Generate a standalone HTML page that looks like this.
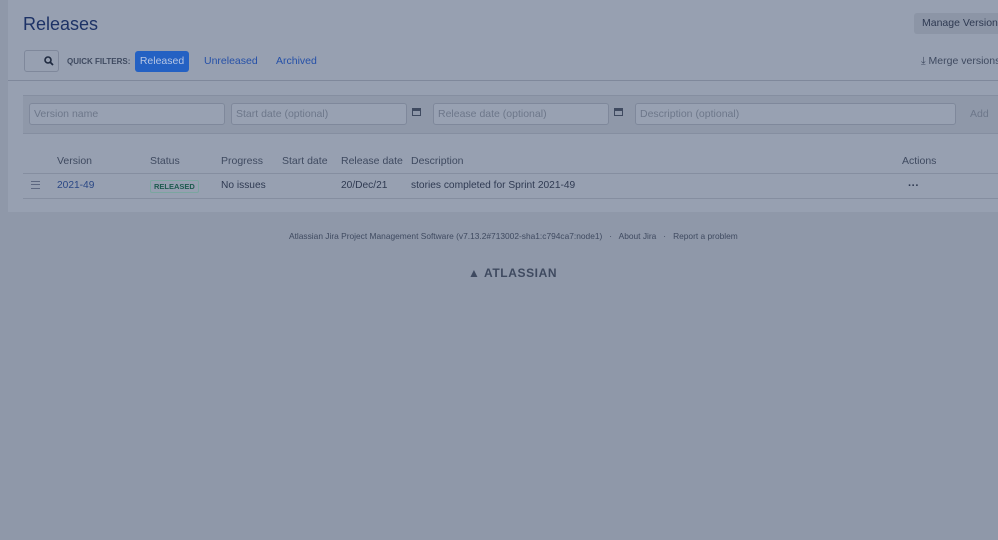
<!DOCTYPE html>
<html><head><meta charset="utf-8"><style>
body{margin:0;width:998px;height:540px;background:#8f98a9;font-family:"Liberation Sans",sans-serif;position:relative;overflow:hidden;color:#2f3a52}
.panel{position:absolute;left:8px;top:0;width:990px;height:212px;background:#97a0b1}
.a{position:absolute;white-space:nowrap}
h1{position:absolute;left:23px;top:14px;margin:0;font-size:18px;font-weight:normal;color:#1d3266}
.inp{position:absolute;top:103px;border:1px solid #7f889b;border-radius:3px;background:#98a1b2;color:#6d778a;font-size:10.5px;line-height:20px;padding-left:4px;box-sizing:border-box;height:22px}
.th{position:absolute;top:155px;font-size:10.5px;color:#3f4a60}
.td{position:absolute;top:180px;font-size:10.2px;color:#2f3a52}
.cal{position:absolute;top:108px;width:9px;height:8px;border:1px solid #3f4a60;border-top-width:3px;box-sizing:border-box}
</style></head><body>
<div class="panel"></div>
<h1>Releases</h1>
<div class="a" style="left:914px;top:13px;width:90px;height:21px;background:#8c95a6;border-radius:3px;font-size:10.5px;line-height:21px;padding-left:8px;color:#2f3a52">Manage Versions</div>
<div class="a" style="left:24px;top:50px;width:35px;height:22px;border:1px solid #7f889b;border-radius:3px;box-sizing:border-box"></div>
<svg class="a" style="left:44px;top:56px" width="10" height="10"><circle cx="4" cy="4" r="3" fill="none" stroke="#1f2a40" stroke-width="1.6"/><path d="M6 6l3 3" stroke="#1f2a40" stroke-width="1.8"/></svg>
<div class="a" style="left:67px;top:57px;font-size:8px;font-weight:bold;color:#3f4a60">QUICK FILTERS:</div>
<div class="a" style="left:135px;top:51px;width:54px;height:21px;background:#2461c3;border-radius:3px;color:#b7c6e4;font-size:10.5px;line-height:21px;text-align:center">Released</div>
<div class="a" style="left:204px;top:55px;font-size:10.5px;color:#2550a8">Unreleased</div>
<div class="a" style="left:276px;top:55px;font-size:10.5px;color:#2550a8">Archived</div>
<div class="a" style="left:921px;top:55px;font-size:10.5px;color:#3f4a60">⤓ Merge versions</div>
<div class="a" style="left:8px;top:80px;width:990px;height:1px;background:#7f889b"></div>
<div class="a" style="left:23px;top:95px;width:975px;height:37px;background:#8f98a9;border-top:1px solid #858ea0;border-bottom:1px solid #858ea0"></div>
<div class="inp" style="left:29px;width:196px">Version name</div>
<div class="inp" style="left:231px;width:176px">Start date (optional)</div>
<div class="cal" style="left:412px"></div>
<div class="inp" style="left:433px;width:176px">Release date (optional)</div>
<div class="cal" style="left:614px"></div>
<div class="inp" style="left:635px;width:321px">Description (optional)</div>
<div class="a" style="left:970px;top:108px;font-size:10.5px;color:#6d778a">Add</div>
<div class="th" style="left:57px">Version</div>
<div class="th" style="left:150px">Status</div>
<div class="th" style="left:221px">Progress</div>
<div class="th" style="left:282px">Start date</div>
<div class="th" style="left:341px">Release date</div>
<div class="th" style="left:411px">Description</div>
<div class="th" style="left:902px">Actions</div>
<div class="a" style="left:23px;top:173px;width:975px;height:1px;background:#858ea0"></div>
<div class="a" style="left:23px;top:198px;width:975px;height:1px;background:#858ea0"></div>
<div class="a" style="left:31px;top:181px;width:9px;height:6px;border-top:1px solid #5d6780;border-bottom:1px solid #5d6780"><div style="margin-top:2px;height:1px;background:#5d6780"></div></div>
<div class="td" style="left:57px;color:#2a4785">2021-49</div>
<div class="a" style="left:150px;top:180px;height:11px;border:1px solid #7aa6a0;border-radius:2px;font-size:7.5px;font-weight:bold;color:#1d5a4e;line-height:11px;padding:0 3px">RELEASED</div>
<div class="td" style="left:221px">No issues</div>
<div class="td" style="left:341px">20/Dec/21</div>
<div class="td" style="left:411px">stories completed for Sprint 2021-49</div>
<div class="a" style="left:908px;top:180px;font-size:11px;font-weight:bold;color:#2f3a52">···</div>
<div class="a" style="left:289px;top:231px;font-size:8.4px;color:#3f4a60">Atlassian Jira Project Management Software (v7.13.2#713002-sha1:c794ca7:node1) &nbsp; · &nbsp; About Jira &nbsp; · &nbsp; Report a problem</div>
<div class="a" style="left:468px;top:266px;font-size:12px;font-weight:bold;color:#3f4a60;letter-spacing:0.6px">▲ ATLASSIAN</div>
</body></html>
